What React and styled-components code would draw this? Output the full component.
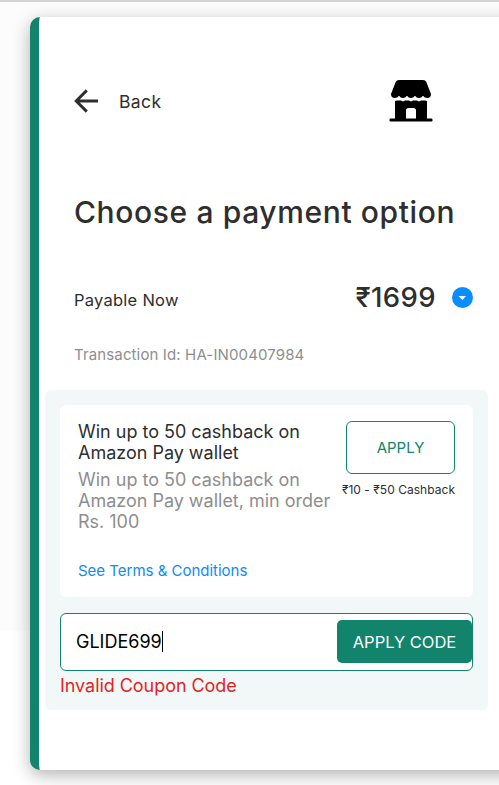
import React, { useState } from 'react'
import styled, { createGlobalStyle } from 'styled-components'

const GlobalStyle = createGlobalStyle`
  * {
    box-sizing: border-box;
  }
  body {
    margin: 0;
    overflow: hidden;
    background: linear-gradient(#fcfcfc 0, #fcfcfc 630px, #fff 631px);
    font-family: Inter, sans-serif;
    color: #2e2e2e;
  }
`

const Page = styled.div`
  height: 785px;
  padding: 15px 0 0 30px;
  overflow: hidden;
  border-top: 2px solid #d4d4d4;
`

const Panel = styled.main`
  width: 500px;
  height: 753px;
  padding: 62px 0 0;
  background: #fff;
  border-left: 9px solid #13846c;
  border-radius: 10px 0 0 10px;
  box-shadow: 0 5px 17px rgba(0, 0, 0, 0.3);
`

const TopBar = styled.header`
  display: flex;
  align-items: center;
  justify-content: space-between;
  width: 359px;
  height: 44px;
  margin-left: 35px;
`

const BackLink = styled.a`
  display: flex;
  align-items: center;
  gap: 20px;
  font-size: 17.5px;
  line-height: 22px;
  letter-spacing: 0.4px;
`

const BackText = styled.span`
  padding-top: 2px;
`

const Title = styled.h1`
  margin: 69px 0 0 35px;
  font-size: 30px;
  line-height: 40px;
  font-weight: 500;
  letter-spacing: 0.62px;
  white-space: nowrap;
`

const PayableRow = styled.div`
  display: flex;
  align-items: center;
  justify-content: space-between;
  width: 399px;
  height: 36px;
  margin: 47px 0 0 35px;
`

const PayableLabel = styled.span`
  padding-top: 5px;
  font-size: 16.5px;
  line-height: 20px;
  letter-spacing: 0.25px;
`

const Amount = styled.span`
  display: flex;
  align-items: center;
  gap: 16px;
  font-size: 27.5px;
  font-weight: 500;
  letter-spacing: 0.4px;
`

const Transaction = styled.p`
  margin: 30px 0 0 35px;
  font-size: 15px;
  line-height: 20px;
  letter-spacing: 0.13px;
  color: #8e8e8e;
`

const Offers = styled.section`
  width: 443px;
  height: 320px;
  margin: 25px 0 0 6px;
  padding: 15px;
  background: #f2f8f8;
  border-radius: 6px;
`

const OfferCard = styled.div`
  display: flex;
  justify-content: space-between;
  height: 192px;
  padding: 16px 18px;
  background: #fff;
  border-radius: 6px;
`

const OfferText = styled.div`
  width: 260px;
  font-size: 18px;
  line-height: 21px;
  letter-spacing: -0.01px;
  white-space: nowrap;
`

const OfferTitle = styled.div`
  color: #2e2e2e;
`

const OfferDetail = styled.div`
  margin-top: 6px;
  color: #8e8e8e;
`

const TermsLink = styled.a`
  display: block;
  margin-top: 28px;
  font-size: 15px;
  color: #0c8cf5;
`

const OfferAction = styled.div`
  display: flex;
  flex-direction: column;
  align-items: flex-end;
  width: 109px;
`

const ApplyButton = styled.button`
  width: 109px;
  height: 53px;
  padding: 0;
  font: 400 15px Inter, sans-serif;
  color: #13846c;
  background: #fff;
  border: 1px solid #13846c;
  border-radius: 6px;
`

const Cashback = styled.span`
  margin-top: 8px;
  font-size: 12px;
  line-height: 16px;
  letter-spacing: 0.03px;
  white-space: nowrap;
`

const CouponField = styled.div`
  display: flex;
  align-items: center;
  height: 58px;
  margin-top: 16px;
  padding: 0 0 1px 15px;
  background: #fff;
  border: 1px solid #13846c;
  border-radius: 6px;
`

const CouponValue = styled.div`
  display: flex;
  flex: 1;
  align-items: center;
  font-size: 18px;
  color: #000;
`

const Caret = styled.span`
  width: 1px;
  height: 21px;
  background: #000;
`

const ApplyCodeButton = styled.button`
  width: 135px;
  height: 43px;
  padding: 0;
  font: 400 16.5px Inter, sans-serif;
  color: #fff;
  background: #13846c;
  border: 0;
  border-radius: 5px;
`

const ErrorText = styled.p`
  margin: 4px 0 0;
  font-size: 18px;
  line-height: 22px;
  letter-spacing: -0.05px;
  color: #e02525;
`

const BackArrow = () => (
  <svg width="25" height="24" viewBox="0 0 25 24" fill="none" stroke="#2e2e2e" strokeWidth="2.9">
    <path d="M24 12H2.5M12.8 1.4L2.2 12L12.8 22.6" />
  </svg>
)

const StoreIcon = () => (
  <svg width="44" height="44" viewBox="0 0 44 44">
    <path d="M10 1H34Q36.5 1 37.3 3L42 15Q42 19 38.3 19Q35.5 19 34 16.8Q32.5 19 30 19Q27.5 19 26 16.8Q24.5 19 22 19Q19.5 19 18 16.8Q16.5 19 14 19Q11.5 19 10 16.8Q8.5 19 5.7 19Q2 19 2 15L6.7 3Q7.5 1 10 1Z" />
    <path d="M6 22L8 21.5H12L14 22.5L16 21.5H20L22 22.5L24 21.5H28L30 22.5L32 21.5H36L38 22V40H27V31.5Q27 29 24.5 29H19.5Q17 29 17 31.5V40H6Z" />
    <rect x="0.5" y="39.5" width="43" height="3" rx="1.2" />
  </svg>
)

const DropdownIcon = () => (
  <svg width="21" height="21" viewBox="0 0 21 21">
    <circle cx="10.5" cy="10.5" r="10.5" fill="#0a8dff" />
    <path d="M6.5 9H14L10.3 13Z" fill="#fff" />
  </svg>
)

const App = () => {
  const [code] = useState('GLIDE699')

  return (
    <Page>
      <GlobalStyle />
      <Panel>
        <TopBar>
          <BackLink>
            <BackArrow />
            <BackText>Back</BackText>
          </BackLink>
          <StoreIcon />
        </TopBar>
        <Title>Choose a payment option</Title>
        <PayableRow>
          <PayableLabel>Payable Now</PayableLabel>
          <Amount>
            ₹1699
            <DropdownIcon />
          </Amount>
        </PayableRow>
        <Transaction>Transaction Id: HA-IN00407984</Transaction>
        <Offers>
          <OfferCard>
            <OfferText>
              <OfferTitle>
                Win up to 50 cashback on
                <br />
                Amazon Pay wallet
              </OfferTitle>
              <OfferDetail>
                Win up to 50 cashback on
                <br />
                Amazon Pay wallet, min order
                <br />
                Rs. 100
              </OfferDetail>
              <TermsLink>See Terms &amp; Conditions</TermsLink>
            </OfferText>
            <OfferAction>
              <ApplyButton>APPLY</ApplyButton>
              <Cashback>₹10 - ₹50 Cashback</Cashback>
            </OfferAction>
          </OfferCard>
          <CouponField>
            <CouponValue>
              {code}
              <Caret />
            </CouponValue>
            <ApplyCodeButton>APPLY CODE</ApplyCodeButton>
          </CouponField>
          <ErrorText>Invalid Coupon Code</ErrorText>
        </Offers>
      </Panel>
    </Page>
  )
}

export default App
